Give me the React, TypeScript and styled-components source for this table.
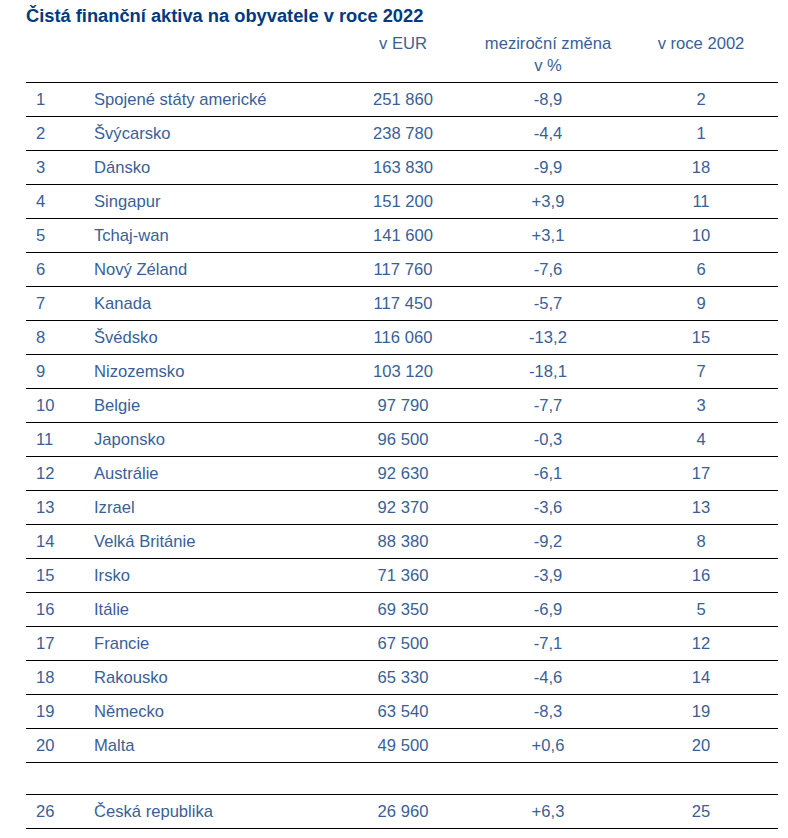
import React from "react";
import styled, { createGlobalStyle } from "styled-components";

const Global = createGlobalStyle`
  html, body { margin: 0; padding: 0; background: #ffffff; }
  body { font-family: "Liberation Sans", Arial, sans-serif; }
`;

const Page = styled.div`
  width: 788px;
  padding-left: 26px;
  box-sizing: border-box;
`;

const Title = styled.h1`
  margin: 0;
  height: 32px;
  line-height: 32px;
  font-size: 18.3px;
  font-weight: bold;
  color: #003a80;
  white-space: nowrap;
`;

const Table = styled.div`
  width: 752px;
  color: #3a5f96;
  font-size: 16.6px;
`;

const cols = "58px 250px 138px 152px 154px";

const HeadRow = styled.div`
  display: grid;
  grid-template-columns: ${cols};
  height: 51px;
  padding-top: 1px;
  box-sizing: border-box;
  border-bottom: 1px solid #000;
  line-height: 21.5px;
`;

const Row = styled.div<{ $empty?: boolean }>`
  display: grid;
  grid-template-columns: ${cols};
  align-items: center;
  height: ${(p) => (p.$empty ? "32px" : "34px")};
  box-sizing: border-box;
  border-bottom: 1px solid #000;
  white-space: nowrap;
`;

const Cell = styled.div<{ $align?: "left" | "center"; $pad?: number }>`
  text-align: ${(p) => p.$align ?? "center"};
  padding-left: ${(p) => p.$pad ?? 0}px;
`;

type R = [string, string, string, string, string];

const data: R[] = [
  ["1", "Spojené státy americké", "251 860", "-8,9", "2"],
  ["2", "Švýcarsko", "238 780", "-4,4", "1"],
  ["3", "Dánsko", "163 830", "-9,9", "18"],
  ["4", "Singapur", "151 200", "+3,9", "11"],
  ["5", "Tchaj-wan", "141 600", "+3,1", "10"],
  ["6", "Nový Zéland", "117 760", "-7,6", "6"],
  ["7", "Kanada", "117 450", "-5,7", "9"],
  ["8", "Švédsko", "116 060", "-13,2", "15"],
  ["9", "Nizozemsko", "103 120", "-18,1", "7"],
  ["10", "Belgie", "97 790", "-7,7", "3"],
  ["11", "Japonsko", "96 500", "-0,3", "4"],
  ["12", "Austrálie", "92 630", "-6,1", "17"],
  ["13", "Izrael", "92 370", "-3,6", "13"],
  ["14", "Velká Británie", "88 380", "-9,2", "8"],
  ["15", "Irsko", "71 360", "-3,9", "16"],
  ["16", "Itálie", "69 350", "-6,9", "5"],
  ["17", "Francie", "67 500", "-7,1", "12"],
  ["18", "Rakousko", "65 330", "-4,6", "14"],
  ["19", "Německo", "63 540", "-8,3", "19"],
  ["20", "Malta", "49 500", "+0,6", "20"],
];

const DataRow = ({ r }: { r: R }) => (
  <Row>
    <Cell $align="left" $pad={10}>{r[0]}</Cell>
    <Cell $align="left" $pad={10}>{r[1]}</Cell>
    <Cell>{r[2]}</Cell>
    <Cell>{r[3]}</Cell>
    <Cell>{r[4]}</Cell>
  </Row>
);

export default function App() {
  return (
    <Page>
      <Global />
      <Title>Čistá finanční aktiva na obyvatele v roce 2022</Title>
      <Table>
        <HeadRow>
          <Cell />
          <Cell />
          <Cell>v EUR</Cell>
          <Cell>
            meziroční změna
            <br />v %
          </Cell>
          <Cell>v roce 2002</Cell>
        </HeadRow>
        {data.map((r) => (
          <DataRow key={r[0]} r={r} />
        ))}
        <Row $empty />
        <DataRow r={["26", "Česká republika", "26 960", "+6,3", "25"]} />
      </Table>
    </Page>
  );
}
